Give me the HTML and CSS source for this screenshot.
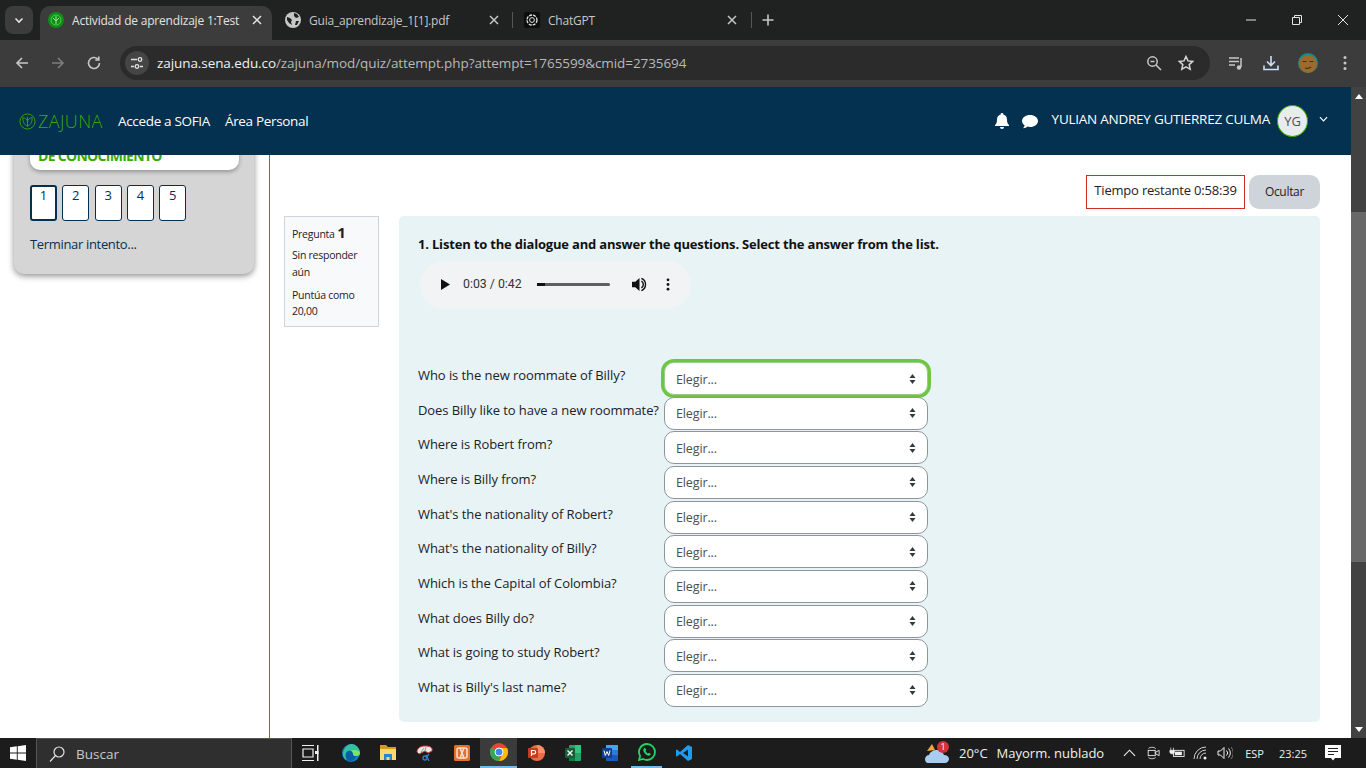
FILE: index.html
```html
<!DOCTYPE html>
<html lang="es">
<head>
    <meta charset="UTF-8">
    <title>Actividad de aprendizaje 1:Test</title>
    <link rel="stylesheet" href="styles.css">
</head>
<body>

<div class="browser">
    <!-- Tabs -->
    <div class="tabbar">
        <div class="tab-toggle">
            <svg width="12" height="12" viewBox="0 0 12 12"><path d="M2.5 4.500 6 8l3.500-3.500" fill="none" stroke="#e3e3e3" stroke-width="1.6"/></svg>
        </div>
        <div class="tab tab-active">
            <svg class="favicon" viewBox="0 0 16 16"><circle cx="8" cy="8" r="8" fill="#0c8f14"/><circle cx="8" cy="8" r="5" fill="none" stroke="#57c95a" stroke-width="1"/><path d="M8 4v8M5 6l3 3 3-3" fill="none" stroke="#9be89c" stroke-width="1"/></svg>
            <span class="tab-title">Actividad de aprendizaje 1:Test</span>
            <svg class="tab-close" viewBox="0 0 10 10"><path d="M1 1l8 8M9 1 1 9" stroke="#e3e3e3" stroke-width="1.5"/></svg>
        </div>
        <div class="tab">
            <svg class="favicon" viewBox="0 0 16 16"><circle cx="8" cy="8" r="8" fill="#c7c7c7"/><path d="M2 5l3 1 2 2-1 2 1 3-3-2-2-3zM9 1l3 1 2 3-3 1-2-2zM11 9l3 0-2 4-2 0z" fill="#202020"/></svg>
            <span class="tab-title">Guia_aprendizaje_1[1].pdf</span>
            <svg class="tab-close" viewBox="0 0 10 10"><path d="M1 1l8 8M9 1 1 9" stroke="#c7c7c7" stroke-width="1.5"/></svg>
        </div>
        <div class="tab-sep"></div>
        <div class="tab tab-last">
            <svg class="favicon" viewBox="0 0 16 16"><rect width="16" height="16" rx="3" fill="#0d0d0d"/><circle cx="8" cy="8" r="5" fill="none" stroke="#e3e3e3" stroke-width="1.3" stroke-dasharray="3 1"/><circle cx="8" cy="8" r="2.400" fill="none" stroke="#e3e3e3"/></svg>
            <span class="tab-title">ChatGPT</span>
            <svg class="tab-close" viewBox="0 0 10 10"><path d="M1 1l8 8M9 1 1 9" stroke="#c7c7c7" stroke-width="1.5"/></svg>
        </div>
        <div class="tab-sep tab-sep-new"></div>
        <svg class="tab-new" viewBox="0 0 12 12"><path d="M6 .5v11M.5 6h11" stroke="#c7c7c7" stroke-width="1.6"/></svg>
        <div class="win-controls">
            <svg viewBox="0 0 12 12"><path d="M1 6h10" stroke="#e3e3e3" stroke-width="1"/></svg>
            <svg viewBox="0 0 12 12"><path d="M1.500 3.500h7v7h-7zM3.500 3.500v-2h7v7h-2" fill="none" stroke="#e3e3e3" stroke-width="1"/></svg>
            <svg viewBox="0 0 12 12"><path d="M1 1l10 10M11 1 1 11" stroke="#e3e3e3" stroke-width="1"/></svg>
        </div>
    </div>

    <!-- Address bar -->
    <div class="toolbar">
        <svg class="nav-icon" viewBox="0 0 16 16"><path d="M14 8H3M8 3 3 8l5 5" fill="none" stroke="#c7c7c7" stroke-width="1.6"/></svg>
        <svg class="nav-icon" viewBox="0 0 16 16"><path d="M2 8h11M8 3l5 5-5 5" fill="none" stroke="#7d7d7d" stroke-width="1.6"/></svg>
        <svg class="nav-icon" viewBox="0 0 16 16"><path d="M13.500 8A5.500 5.500 0 1 1 11.800 4M12.800 1.500V5H9.300" fill="none" stroke="#c7c7c7" stroke-width="1.6"/></svg>
        <div class="omnibox">
            <div class="site-info">
                <svg width="14" height="14" viewBox="0 0 14 14"><path d="M1 3.500h6M10 10.500h3M1 10.500h3" stroke="#e3e3e3" stroke-width="1.4"/><circle cx="10" cy="3.500" r="1.800" fill="none" stroke="#e3e3e3" stroke-width="1.3"/><circle cx="7" cy="10.500" r="1.800" fill="none" stroke="#e3e3e3" stroke-width="1.3"/></svg>
            </div>
            <span class="url"><span class="url-host">zajuna.sena.edu.co</span>/zajuna/mod/quiz/attempt.php?attempt=1765599&amp;cmid=2735694</span>
            <svg class="omni-icon omni-zoom" viewBox="0 0 16 16"><circle cx="6.500" cy="6.500" r="4.700" fill="none" stroke="#c7c7c7" stroke-width="1.5"/><path d="M10 10l5 5M4.500 6.500h4" stroke="#c7c7c7" stroke-width="1.5"/></svg>
            <svg class="omni-icon" viewBox="0 0 16 16"><path d="M8 1.500l2 4.400 4.800.5-3.600 3.200 1 4.700L8 11.900l-4.200 2.400 1-4.700L1.200 6.400 6 5.900z" fill="none" stroke="#d5d5d5" stroke-width="1.5"/></svg>
        </div>
        <div class="toolbar-right">
            <svg viewBox="0 0 16 16"><path d="M1 3h10M1 6.500h10M1 10h6" stroke="#c7c7c7" stroke-width="1.500"/><path d="M13 3v9" stroke="#c7c7c7" stroke-width="1.500"/><circle cx="11" cy="12.500" r="2.200" fill="#c7c7c7"/></svg>
            <svg viewBox="0 0 16 16"><path d="M8 1v9M4 6.500 8 10.500l4-4" fill="none" stroke="#c9dffb" stroke-width="1.600"/><path d="M1 10.500v4h14v-4" fill="none" stroke="#c9dffb" stroke-width="1.600"/></svg>
            <svg class="profile" viewBox="0 0 20 20"><circle cx="10" cy="10" r="10" fill="#1a8a8a"/><circle cx="10" cy="11" r="9" fill="#9c6a2c"/><path d="M4.500 8.500h4M11.500 8.500h4M7 15c2 1 5 0 6-1" stroke="#4a3010" stroke-width="1.200" fill="none"/></svg>
            <svg viewBox="0 0 16 16"><circle cx="8" cy="2.500" r="1.500" fill="#c7c7c7"/><circle cx="8" cy="8" r="1.500" fill="#c7c7c7"/><circle cx="8" cy="13.500" r="1.500" fill="#c7c7c7"/></svg>
        </div>
    </div>

    <div class="window">
        <div class="viewport">
            <header class="site-header">
                <div class="logo">
                    <svg width="17" height="17" viewBox="0 0 18 18"><circle cx="9" cy="9" r="8" fill="none" stroke="#39a900"/><path d="M9 4v10M4 5c0 5 2 8 5 9 3-1 5-4 5-9-3 0-5 2-5 5 0-3-2-5-5-5z" fill="none" stroke="#39a900" stroke-width=".9"/></svg>
                    <span class="logo-text">ZAJUNA</span>
                </div>
                <nav class="site-nav">
                    <a>Accede a SOFIA</a>
                    <a>Área Personal</a>
                </nav>
                <div class="user-menu">
                    <svg class="bell" viewBox="0 0 14 16"><path d="M7 0a1.300 1.300 0 0 1 1.300 1.500C10.800 2 12 4 12 6.500c0 3.500 1 4.500 2 5.500v1H0v-1c1-1 2-2 2-5.500C2 4 3.200 2 5.700 1.500A1.300 1.300 0 0 1 7 0zM5 14h4a2 2 0 0 1-4 0z" fill="#fff"/></svg>
                    <svg class="chat" viewBox="0 0 16 15"><path d="M8 1c4.400 0 8 2.600 8 6s-3.600 6-8 6c-1 0-1.800-.1-2.600-.4C4.400 13.500 3 14.300 1 14.300c.9-.9 1.500-2 1.600-3C1 10.200 0 8.700 0 7c0-3.400 3.600-6 8-6z" fill="#fff"/></svg>
                    <span class="user-name">YULIAN ANDREY GUTIERREZ CULMA</span>
                    <span class="avatar">YG</span>
                    <svg class="caret" viewBox="0 0 10 6"><path d="M1 1l4 4 4-4" fill="none" stroke="#fff" stroke-width="1.300"/></svg>
                </div>
            </header>

            <div class="content">
                <aside class="sidebar">
                    <div class="quiz-panel">
                        <div class="panel-title">DE CONOCIMIENTO</div>
                        <div class="quiz-nav">
                            <a class="qn-btn qn-current">1</a>
                            <a class="qn-btn">2</a>
                            <a class="qn-btn">3</a>
                            <a class="qn-btn">4</a>
                            <a class="qn-btn">5</a>
                        </div>
                        <a class="finish-link">Terminar intento...</a>
                    </div>
                </aside>

                <main class="main">
                    <div class="timer-row">
                        <div class="timer">Tiempo restante 0:58:39</div>
                        <button class="btn-hide">Ocultar</button>
                    </div>
                    <div class="question">
                        <div class="q-info">
                            <div class="q-number">Pregunta <strong>1</strong></div>
                            <div class="q-state">Sin responder aún</div>
                            <div class="q-grade">Puntúa como 20,00</div>
                        </div>
                        <div class="q-content">
                            <p class="q-text">1. Listen to the dialogue and answer the questions. Select the answer from the list.</p>
                            <div class="audio">
                                <svg class="audio-play" viewBox="0 0 10 12"><path d="M0 0l10 6-10 6z" fill="#111"/></svg>
                                <span class="audio-time">0:03 / 0:42</span>
                                <div class="audio-track"><div class="audio-done"></div></div>
                                <svg class="audio-vol" viewBox="0 0 16 16"><path d="M0 5h3.500L8 1v14l-4.500-4H0z" fill="#111"/><path d="M10 4.500a4 4 0 0 1 0 7M10 1.500a7 7 0 0 1 0 13" fill="none" stroke="#111" stroke-width="1.500"/></svg>
                                <svg class="audio-more" viewBox="0 0 4 14"><circle cx="2" cy="2" r="1.500" fill="#111"/><circle cx="2" cy="7" r="1.500" fill="#111"/><circle cx="2" cy="12" r="1.500" fill="#111"/></svg>
                            </div>
                            <div class="match-grid">
                                <label>Who is the new roommate of Billy?</label>
                                <select class="focused"><option>Elegir...</option></select>
                                <label>Does Billy like to have a new roommate?</label>
                                <select><option>Elegir...</option></select>
                                <label>Where is Robert from?</label>
                                <select><option>Elegir...</option></select>
                                <label>Where is Billy from?</label>
                                <select><option>Elegir...</option></select>
                                <label>What's the nationality of Robert?</label>
                                <select><option>Elegir...</option></select>
                                <label>What's the nationality of Billy?</label>
                                <select><option>Elegir...</option></select>
                                <label>Which is the Capital of Colombia?</label>
                                <select><option>Elegir...</option></select>
                                <label>What does Billy do?</label>
                                <select><option>Elegir...</option></select>
                                <label>What is going to study Robert?</label>
                                <select><option>Elegir...</option></select>
                                <label>What is Billy's last name?</label>
                                <select><option>Elegir...</option></select>
                            </div>
                        </div>
                    </div>
                </main>
            </div>
        </div>

        <div class="scrollbar">
            <svg class="sb-arrow" viewBox="0 0 8 5"><path d="M4 0l4 5H0z" fill="#fff"/></svg>
            <div class="sb-thumb"></div>
            <svg class="sb-arrow sb-arrow-down" viewBox="0 0 8 5"><path d="M0 0h8L4 5z" fill="#fff"/></svg>
        </div>
    </div>

    <!-- Windows taskbar -->
    <div class="taskbar">
        <div class="start">
            <svg width="16" height="16" viewBox="0 0 16 16"><path d="M0 2.300 6.800 1.300v6.300H0zM7.700 1.200 16 0v7.600H7.700zM0 8.500h6.800v6.300L0 13.800zM7.700 8.500H16V16l-8.300-1.200z" fill="#fff"/></svg>
        </div>
        <div class="search">
            <svg width="16" height="16" viewBox="0 0 16 16"><circle cx="10" cy="6" r="5" fill="none" stroke="#e3e3e3" stroke-width="1.200"/><path d="M6.500 9.500 1 15.500" stroke="#e3e3e3" stroke-width="1.200"/></svg>
            <span>Buscar</span>
        </div>
        <div class="task-icon task-view">
            <svg viewBox="0 0 18 18"><path d="M0 1.500h12M0 16.500h12M1 5h10v8H1z" fill="none" stroke="#f0f0f0" stroke-width="1.200"/><path d="M15 1h1.500v16H15z" fill="#f0f0f0"/><path d="M13 7h3.500v3H13z" fill="#f0f0f0"/></svg>
        </div>
        <div class="task-icon">
            <svg viewBox="0 0 18 18"><circle cx="9" cy="9" r="9" fill="#0f7fc4"/><path d="M1 11C1 5 5 0 9.500 0 14 0 18 4.500 18 9c0 2-2 3-4 3-1.500 0-3-.5-3-1.500C11 8 9 6 6.500 7 4 8 4 12 6 16c-3-.5-5-2-5-5z" fill="#35c1a0"/><path d="M18 9c0 2-2 3-4 3-1.500 0-3-.5-3-1.500 0-1.500-.5-3-2-3.500 3-2 8-1 9 2z" fill="#7fe35c"/><path d="M4 9c1-2 3-2.500 4.500-2 2 .7 2.500 2.500 2.500 3.500 0 1 1.500 1.500 3 1.500-1 4-5 6-8 4.500C3.500 15 3 11 4 9z" fill="#0a5ea8"/></svg>
        </div>
        <div class="task-icon">
            <svg viewBox="0 0 18 18"><path d="M1 1h6l2 2h8v3H1z" fill="#d69a1f"/><path d="M1 5h16v11H1z" fill="#f8d775"/><path d="M5 10h8v6H5z" fill="#2a83d0"/><path d="M7.500 13h3v3h-3z" fill="#f8d775"/></svg>
        </div>
        <div class="task-icon">
            <svg viewBox="0 0 18 18"><path d="M1 8c0-4 4-6 8-6 4 0 8 1 7 5l-4 2-3-2-6 3z" fill="#f0e6e6" stroke="#d23b3b" stroke-width="1"/><path d="M5 8l3-4M9 7l1-4" stroke="#999" stroke-width="1"/><circle cx="9" cy="14" r="2" fill="none" stroke="#2f7fd0" stroke-width="1.300"/><path d="M10 11l3 6M13 10l-3 4" stroke="#2f7fd0" stroke-width="1.300"/></svg>
        </div>
        <div class="task-icon">
            <svg viewBox="0 0 18 18"><rect width="16" height="16" x="1" y="1" rx="1.500" fill="#e2702a"/><rect x="4" y="4" width="10" height="10" rx="2" fill="none" stroke="#fbe3d3" stroke-width="1.500"/><path d="M7 4l2 5-2 5M11 4 9 9l2 5" fill="none" stroke="#fbe3d3" stroke-width="1.500"/></svg>
        </div>
        <div class="task-icon task-active">
            <svg viewBox="0 0 18 18"><circle cx="9" cy="9" r="9" fill="#ea4335"/><path d="M9 9 1.200 4.500A9 9 0 0 0 9 18z" fill="#34a853"/><path d="M9 5h8.100A9 9 0 0 1 9 18L13 10z" fill="#fbbc05"/><circle cx="9" cy="9" r="4" fill="#4285f4" stroke="#fff" stroke-width="1"/></svg>
        </div>
        <div class="task-icon">
            <svg viewBox="0 0 18 18"><circle cx="10" cy="9" r="8" fill="#ed6c47"/><path d="M10 1a8 8 0 0 1 8 8h-8z" fill="#ff8f6b"/><rect x="1" y="4" width="10" height="10" rx="1" fill="#c43e1c"/><path d="M4.500 12V6.500H7a1.500 1.500 0 0 1 0 3.300H4.500" fill="none" stroke="#fff" stroke-width="1.200"/></svg>
        </div>
        <div class="task-icon">
            <svg viewBox="0 0 18 18"><rect x="5" y="1" width="12" height="16" rx="1" fill="#21a366"/><path d="M11 1h6v8h-6z" fill="#33c481"/><path d="M5 9h6v8H5z" fill="#107c41"/><rect x="1" y="4" width="10" height="10" rx="1" fill="#185c37"/><path d="M3.500 6.500l5 5M8.500 6.500l-5 5" stroke="#fff" stroke-width="1.300"/></svg>
        </div>
        <div class="task-icon">
            <svg viewBox="0 0 18 18"><rect x="5" y="1" width="12" height="16" rx="1" fill="#2b7cd3"/><path d="M5 1h12v5H5z" fill="#41a5ee"/><path d="M5 11h12v6H5z" fill="#185abd"/><rect x="1" y="4" width="10" height="10" rx="1" fill="#103f91"/><path d="M3 6.500l1.300 5L6 7.500l1.700 4 1.300-5" fill="none" stroke="#fff" stroke-width="1"/></svg>
        </div>
        <div class="task-icon task-running">
            <svg viewBox="0 0 18 18"><path d="M9 1a8 8 0 0 1 0 16c-1.400 0-2.700-.4-3.900-1L1 17l1.100-4A8 8 0 0 1 9 1z" fill="none" stroke="#25d366" stroke-width="1.800"/><path d="M6 5.500c-1 1-1 2.500.5 4.500s3.500 3 5 2.500c1-.3 1.300-1.300 1-1.800L11 9.800l-1 .8c-1-.4-2-1.500-2.500-2.600l.8-1L7.300 5.300C7 5 6.400 5 6 5.500z" fill="#25d366"/></svg>
        </div>
        <div class="task-icon">
            <svg viewBox="0 0 18 18"><path d="M13 1l4 2v12l-4 2-8-7-3 2.500L1 12V6l1-.5L5 8z" fill="#1f9cf0"/><path d="M13 5.500 8 9l5 3.500z" fill="#1e1e1e"/></svg>
        </div>

        <div class="tray">
            <div class="weather">
                <svg width="26" height="24" viewBox="0 0 26 24"><path d="M2 10 7 3l3 6z" fill="#f3a83b"/><path d="M3 22c-2 0-3-2-3-4s2-4 4-4c1-3 4-5 8-5 3 0 6 2 7 5 3 0 5 2 5 4s-2 4-4 4z" fill="#a9cdf0"/><circle cx="18" cy="6" r="6" fill="#d13438"/><text x="18" y="9" class="weather-badge">1</text></svg>
                <span class="temp">20°C</span>
                <span>Mayorm. nublado</span>
            </div>
            <svg class="tray-icon chevron" viewBox="0 0 14 8"><path d="M1 7l6-6 6 6" fill="none" stroke="#f0f0f0" stroke-width="1.200"/></svg>
            <svg class="tray-icon" viewBox="0 0 16 16"><path d="M3 3c0-1.500 6-2.500 8 0M3 13c0 1.500 6 2.500 8 0" fill="none" stroke="#f0f0f0"/><rect x="2.500" y="5" width="8" height="6" fill="none" stroke="#f0f0f0"/><path d="M11 7l4-2v6l-4-2z" fill="none" stroke="#f0f0f0"/></svg>
            <svg class="tray-icon" viewBox="0 0 18 14"><rect x="5" y="4" width="12" height="7" fill="none" stroke="#f0f0f0"/><rect x="6.500" y="5.500" width="8" height="4" fill="#f0f0f0"/><path d="M2 1v3M5 1v3M1 4h5v2c0 1-1 2-2.500 2S1 7 1 6z" fill="#f0f0f0" stroke="#f0f0f0" stroke-width=".8"/></svg>
            <svg class="tray-icon" viewBox="0 0 16 14"><path d="M1 13A12 12 0 0 1 13 1M4 13a9 9 0 0 1 9-9M7 13a6 6 0 0 1 6-6" fill="none" stroke="#cfcfcf"/><circle cx="12" cy="12" r="1.500" fill="#f0f0f0"/></svg>
            <svg class="tray-icon" viewBox="0 0 16 14"><path d="M1 5h2.500L7 1.500v11L3.500 9H1z" fill="none" stroke="#f0f0f0"/><path d="M9.500 4.500a3.500 3.500 0 0 1 0 5M11.500 2.500a6.500 6.500 0 0 1 0 9" fill="none" stroke="#f0f0f0"/><path d="M14 1a9 9 0 0 1 0 12" fill="none" stroke="#777"/></svg>
            <span class="tray-lang">ESP</span>
            <span class="tray-clock">23:25</span>
            <svg class="tray-notify" viewBox="0 0 16 16"><path d="M0 0h16v13h-6l-2 2.500L6 13H0z" fill="#fff"/><path d="M3 3.500h10M3 6.500h10M3 9.500h6" stroke="#222" stroke-width="1"/></svg>
        </div>
    </div>
</div>

</body>
</html>
```

FILE: styles.css
```css
* { box-sizing: border-box; }
html, body { margin: 0; height: 100%; overflow: hidden; }
body { font-family: "Open Sans", "Noto Sans", sans-serif; color: #1d2125; }
.browser { width: 1366px; height: 768px; display: flex; flex-direction: column; overflow: hidden; }

/* Tabs */
.tabbar { height: 40px; background: #202121; display: flex; align-items: flex-end; flex-shrink: 0; color: #e3e3e3; }
.tab-toggle { width: 28px; height: 28px; margin: 0 7px 6px 5px; background: #3c3c3c; border-radius: 8px; display: flex; align-items: center; justify-content: center; }
.tab { width: 232px; height: 34px; padding: 0 10px 6px 8px; display: flex; align-items: center; font-size: 12px; color: #c7c7c7; }
.tab-active { background: #3c3c3c; border-radius: 10px 10px 0 0; color: #e3e3e3; margin-right: 5px; }
.tab-last { width: 231px; margin-left: 3px; }
.favicon { width: 16px; height: 16px; flex-shrink: 0; margin-right: 8px; }
.tab-title { flex: 1; white-space: nowrap; overflow: hidden; letter-spacing: -.2px; }
.tab-close { width: 10px; height: 10px; flex-shrink: 0; margin-left: 8px; }
.tab-sep { width: 1px; height: 16px; background: #555; margin: 0 0 12px 3px; }
.tab-sep-new { margin-left: 4px; }
.tab-new { width: 12px; height: 12px; margin: 0 0 14px 10px; }
.win-controls { margin-left: auto; height: 40px; display: flex; align-items: center; gap: 34px; padding: 0 17px 0 0; }
.win-controls svg { width: 12px; height: 12px; }

/* Address bar */
.toolbar { height: 47px; background: #3c3c3c; display: flex; align-items: center; flex-shrink: 0; padding: 0 0 1px 14px; }
.nav-icon { width: 16px; height: 16px; margin-right: 20px; }
.omnibox { width: 1090px; height: 34px; margin-left: -2px; background: #2b2b2b; border-radius: 17px; display: flex; align-items: center; padding: 0 16px 0 5px; }
.site-info { width: 24px; height: 24px; border-radius: 50%; background: #454545; display: flex; align-items: center; justify-content: center; margin-right: 8px; }
.url { font-size: 13.500px; color: #b9b9b9; flex: 1; white-space: nowrap; letter-spacing: -.08px; }
.url-host { color: #f0f0f0; }
.omni-icon { width: 16px; height: 16px; margin-left: 16px; }
.toolbar-right { display: flex; align-items: center; padding-left: 18px; gap: 19px; }
.toolbar-right svg { width: 16px; height: 16px; }
.toolbar-right .profile { width: 20px; height: 20px; }

/* Page area */
.window { flex: 1; display: flex; min-height: 0; }
.viewport { flex: 1; display: flex; flex-direction: column; min-width: 0; background: #fff; }
.scrollbar { width: 15px; background: #424242; display: flex; flex-direction: column; align-items: center; padding: 7px 0 6px; }
.sb-arrow { width: 8px; height: 5px; flex-shrink: 0; }
.sb-arrow-down { margin-top: auto; }
.sb-thumb { width: 15px; height: 350px; margin-top: 113px; background: #686868; }

/* Site header */
.site-header { height: 68px; background: #03314f; display: flex; align-items: center; padding: 0 23px 0 19px; flex-shrink: 0; position: relative; z-index: 1; color: #fff; }
.logo { display: flex; align-items: center; width: 99px; color: #39a900; }
.logo-text { font-size: 18px; font-weight: 300; letter-spacing: .4px; margin-left: 2px; }
.site-nav { display: flex; gap: 15px; font-size: 13.500px; letter-spacing: -.33px; }
.user-menu { margin-left: auto; display: flex; align-items: center; }
.bell { width: 14px; height: 16px; }
.chat { width: 16px; height: 15px; margin-left: 13px; }
.user-name { font-size: 13.500px; margin: -5px 0 0 14px; letter-spacing: -.25px; }
.avatar { width: 31px; height: 32px; margin: 0 11px 0 7px; border-radius: 50%; background: #e9ecef; border: 1px solid #39a900; color: #495057; font-size: 13px; display: flex; align-items: center; justify-content: center; }
.caret { width: 9px; height: 6px; margin-top: -4px; }

.content { flex: 1; display: flex; min-height: 0; overflow: hidden; }

/* Left panel */
.sidebar { width: 270px; flex-shrink: 0; border-right: 1px solid #4f8a2b; }
.quiz-panel { width: 240px; height: 149px; margin: -30px 0 0 14px; background: #d5d5d5; border-radius: 0 0 10px 10px; box-shadow: 0 2px 6px rgba(0,0,0,.45); }
.panel-title { height: 45px; margin: 0 15px 0 16px; padding: 21px 8px 0; background: #fff; border-radius: 0 0 10px 10px; box-shadow: 0 2px 4px rgba(0,0,0,.3); color: #39a900; font-size: 14px; font-weight: 700; line-height: 20px; letter-spacing: -.7px; }
.quiz-nav { display: flex; gap: 5.300px; margin: 15px 0 0 16px; }
.qn-btn { width: 27px; height: 36px; background: #fff; border: 1px solid #03314f; border-radius: 3px; color: #03314f; font-size: 13px; line-height: 18px; text-align: center; }
.qn-current { border-width: 2px; line-height: 16px; }
.finish-link { display: block; margin: 13px 0 0 16px; color: #03314f; font-size: 13px; line-height: 20px; letter-spacing: -.33px; }

/* Main column */
.main { flex: 1; min-width: 0; padding: 20px 31px 0 14px; }
.timer-row { display: flex; justify-content: flex-end; gap: 4px; height: 34px; margin-bottom: 7px; }
.timer { width: 159px; border: 1px solid #ca3120; display: flex; align-items: center; justify-content: center; padding-bottom: 4px; font-size: 13px; letter-spacing: -.2px; white-space: nowrap; }
.btn-hide { width: 71px; border: 0; border-radius: 10px; background: #ced4da; color: #1d2125; padding: 0 0 2px; font: 12px "Open Sans", sans-serif; letter-spacing: -.3px; }

.question { display: flex; gap: 20px; }
.q-info { width: 95px; height: 111px; padding: 7px 7px; background: #f8f9fa; border: 1px solid #ced4da; font-size: 10.500px; line-height: 17px; letter-spacing: -.25px; flex-shrink: 0; }
.q-number strong { font-size: 15px; }
.q-state { margin-top: 4px; }
.q-grade { margin-top: 6px; line-height: 16px; }

.q-content { flex: 1; height: 506px; padding: 20px 18px 0 19px; background: #e7f3f5; border-radius: 5px; }
.q-text { margin: 0; font-size: 13px; font-weight: 700; line-height: 17px; color: #111; letter-spacing: -.185px; white-space: nowrap; }
.audio { width: 271px; height: 48px; margin: 8px 0 0 2px; padding: 0 20px 2px 21px; background: #f1f3f4; border-radius: 24px; display: flex; align-items: center; }
.audio-play { width: 9px; height: 11px; }
.audio-time { margin-left: 13px; font-size: 12.300px; color: #333; font-family: "Roboto", sans-serif; white-space: nowrap; }
.audio-track { width: 73px; height: 3px; margin-left: 15px; background: #5f5f5f; border-radius: 2px; }
.audio-done { width: 8px; height: 3px; background: #111; }
.audio-vol { width: 15px; height: 15px; margin-left: 22px; }
.audio-more { width: 4px; height: 13px; margin-left: 19px; }

.match-grid { display: grid; grid-template-columns: 246px 264px; grid-auto-rows: 34.670px; margin-top: 53px; }
.match-grid label { font-size: 13px; line-height: 17px; padding-top: 5px; letter-spacing: -.07px; white-space: nowrap; color: #1d2125; }
.match-grid select { height: 33px; width: 264px; appearance: none; background: #fff url("data:image/svg+xml,%3Csvg xmlns='http://www.w3.org/2000/svg' width='7' height='10'%3E%3Cpath d='M3.500 0l3 4h-6zM3.500 10l3-4h-6z' fill='%23343a40'/%3E%3C/svg%3E") no-repeat right 11px center; border: 1px solid #8f959e; border-radius: 10px; padding: 1px 12px 0 11px; font: 12.500px "Open Sans", sans-serif; letter-spacing: -.13px; color: #495057; }
.match-grid select.focused { border-color: #9ccc8a; box-shadow: 0 0 0 3px #6cc644; }

/* Taskbar */
.taskbar { height: 30px; background: #1c1c1c; display: flex; align-items: stretch; flex-shrink: 0; color: #f0f0f0; }
.start { width: 36px; display: flex; align-items: center; justify-content: center; }
.search { width: 256px; background: #2f2f2f; border: 1px solid #565656; border-bottom: 0; display: flex; align-items: center; gap: 11px; padding-left: 12px; font-size: 13.500px; color: #c9c9c9; }
.task-icon { width: 37px; display: flex; align-items: center; justify-content: center; }
.task-icon svg { width: 18px; height: 18px; }
.task-view { margin-right: 3px; }
.task-active { background: #3b3b3b; border-bottom: 2px solid #76b9ed; }
.task-running { border-bottom: 2px solid #76b9ed; margin: 0 3px; width: 31px; }
.tray { margin-left: auto; display: flex; align-items: center; padding-right: 25px; }
.weather { display: flex; align-items: center; font-size: 13px; margin-right: 19px; white-space: nowrap; }
.weather-badge { font: 9px "Open Sans", sans-serif; fill: #fff; text-anchor: middle; }
.temp { margin: 0 9px 0 8px; }
.tray-icon { width: 16px; height: 14px; margin-right: 8px; }
.chevron { width: 13px; height: 8px; margin-right: 9px; }
.tray-lang { font-size: 11px; margin-left: 4px; }
.tray-clock { font-size: 11px; margin: 0 18px 0 15px; }
.tray-notify { width: 16px; height: 16px; }
```
